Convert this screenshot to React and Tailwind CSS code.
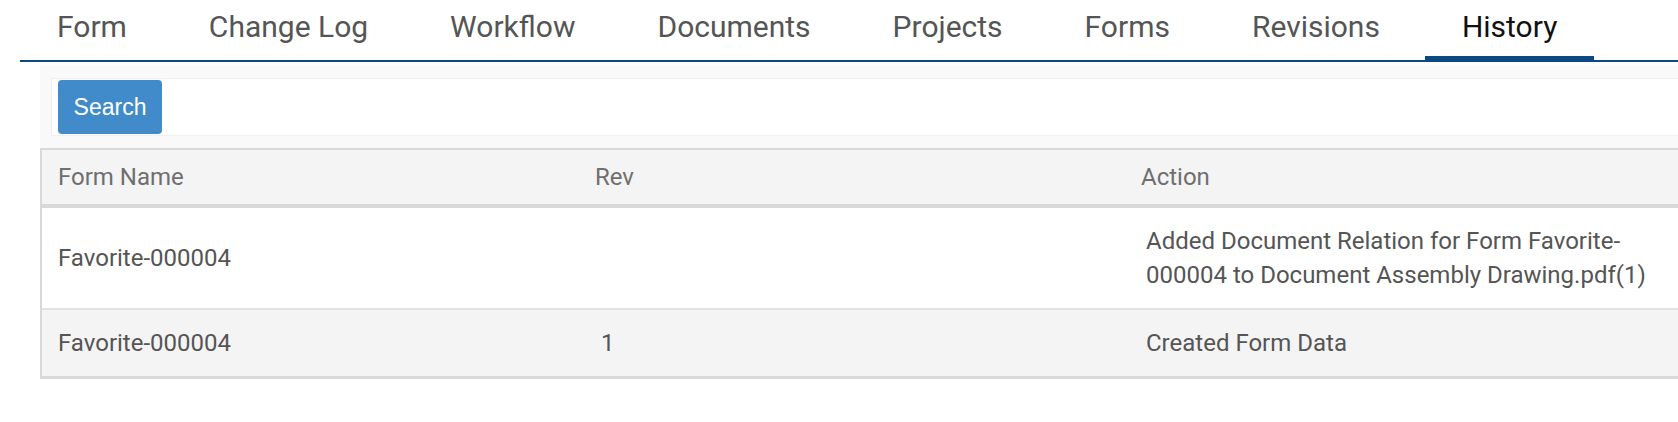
const tabs = ["Form", "Change Log", "Workflow", "Documents", "Projects", "Forms", "Revisions", "History"];

function Tab({ label, active }) {
  return (
    <div
      className={
        active
          ? "border-b-4 border-[#0b4884] px-[37px] pt-[9px] pb-[12px] text-[30px] leading-[35px] text-[#111]"
          : "border-b-4 border-transparent px-[37px] pt-[9px] pb-[12px] text-[30px] leading-[35px] text-[#555]"
      }
    >
      {label}
    </div>
  );
}

export default function App() {
  return (
    <div className="h-[422px] w-[1678px] overflow-hidden bg-white font-['Roboto',sans-serif]">
      <div className="ml-[20px] flex gap-2 border-b-2 border-[#0b4884]">
        {tabs.map((t) => (
          <Tab key={t} label={t} active={t === "History"} />
        ))}
      </div>

      <div className="mt-[4px] ml-[40px] w-[1660px] bg-[#f9f9f9] pt-[12px]">
        <div className="ml-[11px] border border-[#efefef] bg-white px-[6px] py-px">
          <button className="flex h-[54px] w-[104px] items-center justify-center rounded-[4px] bg-[#428bca] font-['Liberation_Sans',Arial,sans-serif] text-[23px] text-white">
            Search
          </button>
        </div>

        <div className="mt-[12px] border-t-2 border-b-[3px] border-l-2 border-[#d9d9d9] bg-white text-[24px]">
          <div className="grid h-[58px] grid-cols-[537px_546px_1fr] items-center border-b-4 border-[#d9d9d9] bg-[#f4f4f4] text-[#6f6f6f]">
            <div className="px-4">Form Name</div>
            <div className="px-4">Rev</div>
            <div className="px-4">Action</div>
          </div>

          <div className="grid grid-cols-[543px_545px_1fr] items-center border-b-2 border-[#e2e2e2] bg-white leading-[34px] text-[#555]">
            <div className="px-4 py-4">Favorite-000004</div>
            <div className="px-4 py-4"></div>
            <div className="px-4 py-4">
              Added Document Relation for Form Favorite-<wbr />000004 to Document Assembly Drawing.pdf(1)
            </div>
          </div>

          <div className="grid grid-cols-[543px_545px_1fr] items-center bg-[#f4f4f4] leading-[34px] text-[#555]">
            <div className="px-4 py-4">Favorite-000004</div>
            <div className="px-4 py-4">1</div>
            <div className="px-4 py-4">Created Form Data</div>
          </div>
        </div>
      </div>
    </div>
  );
}
